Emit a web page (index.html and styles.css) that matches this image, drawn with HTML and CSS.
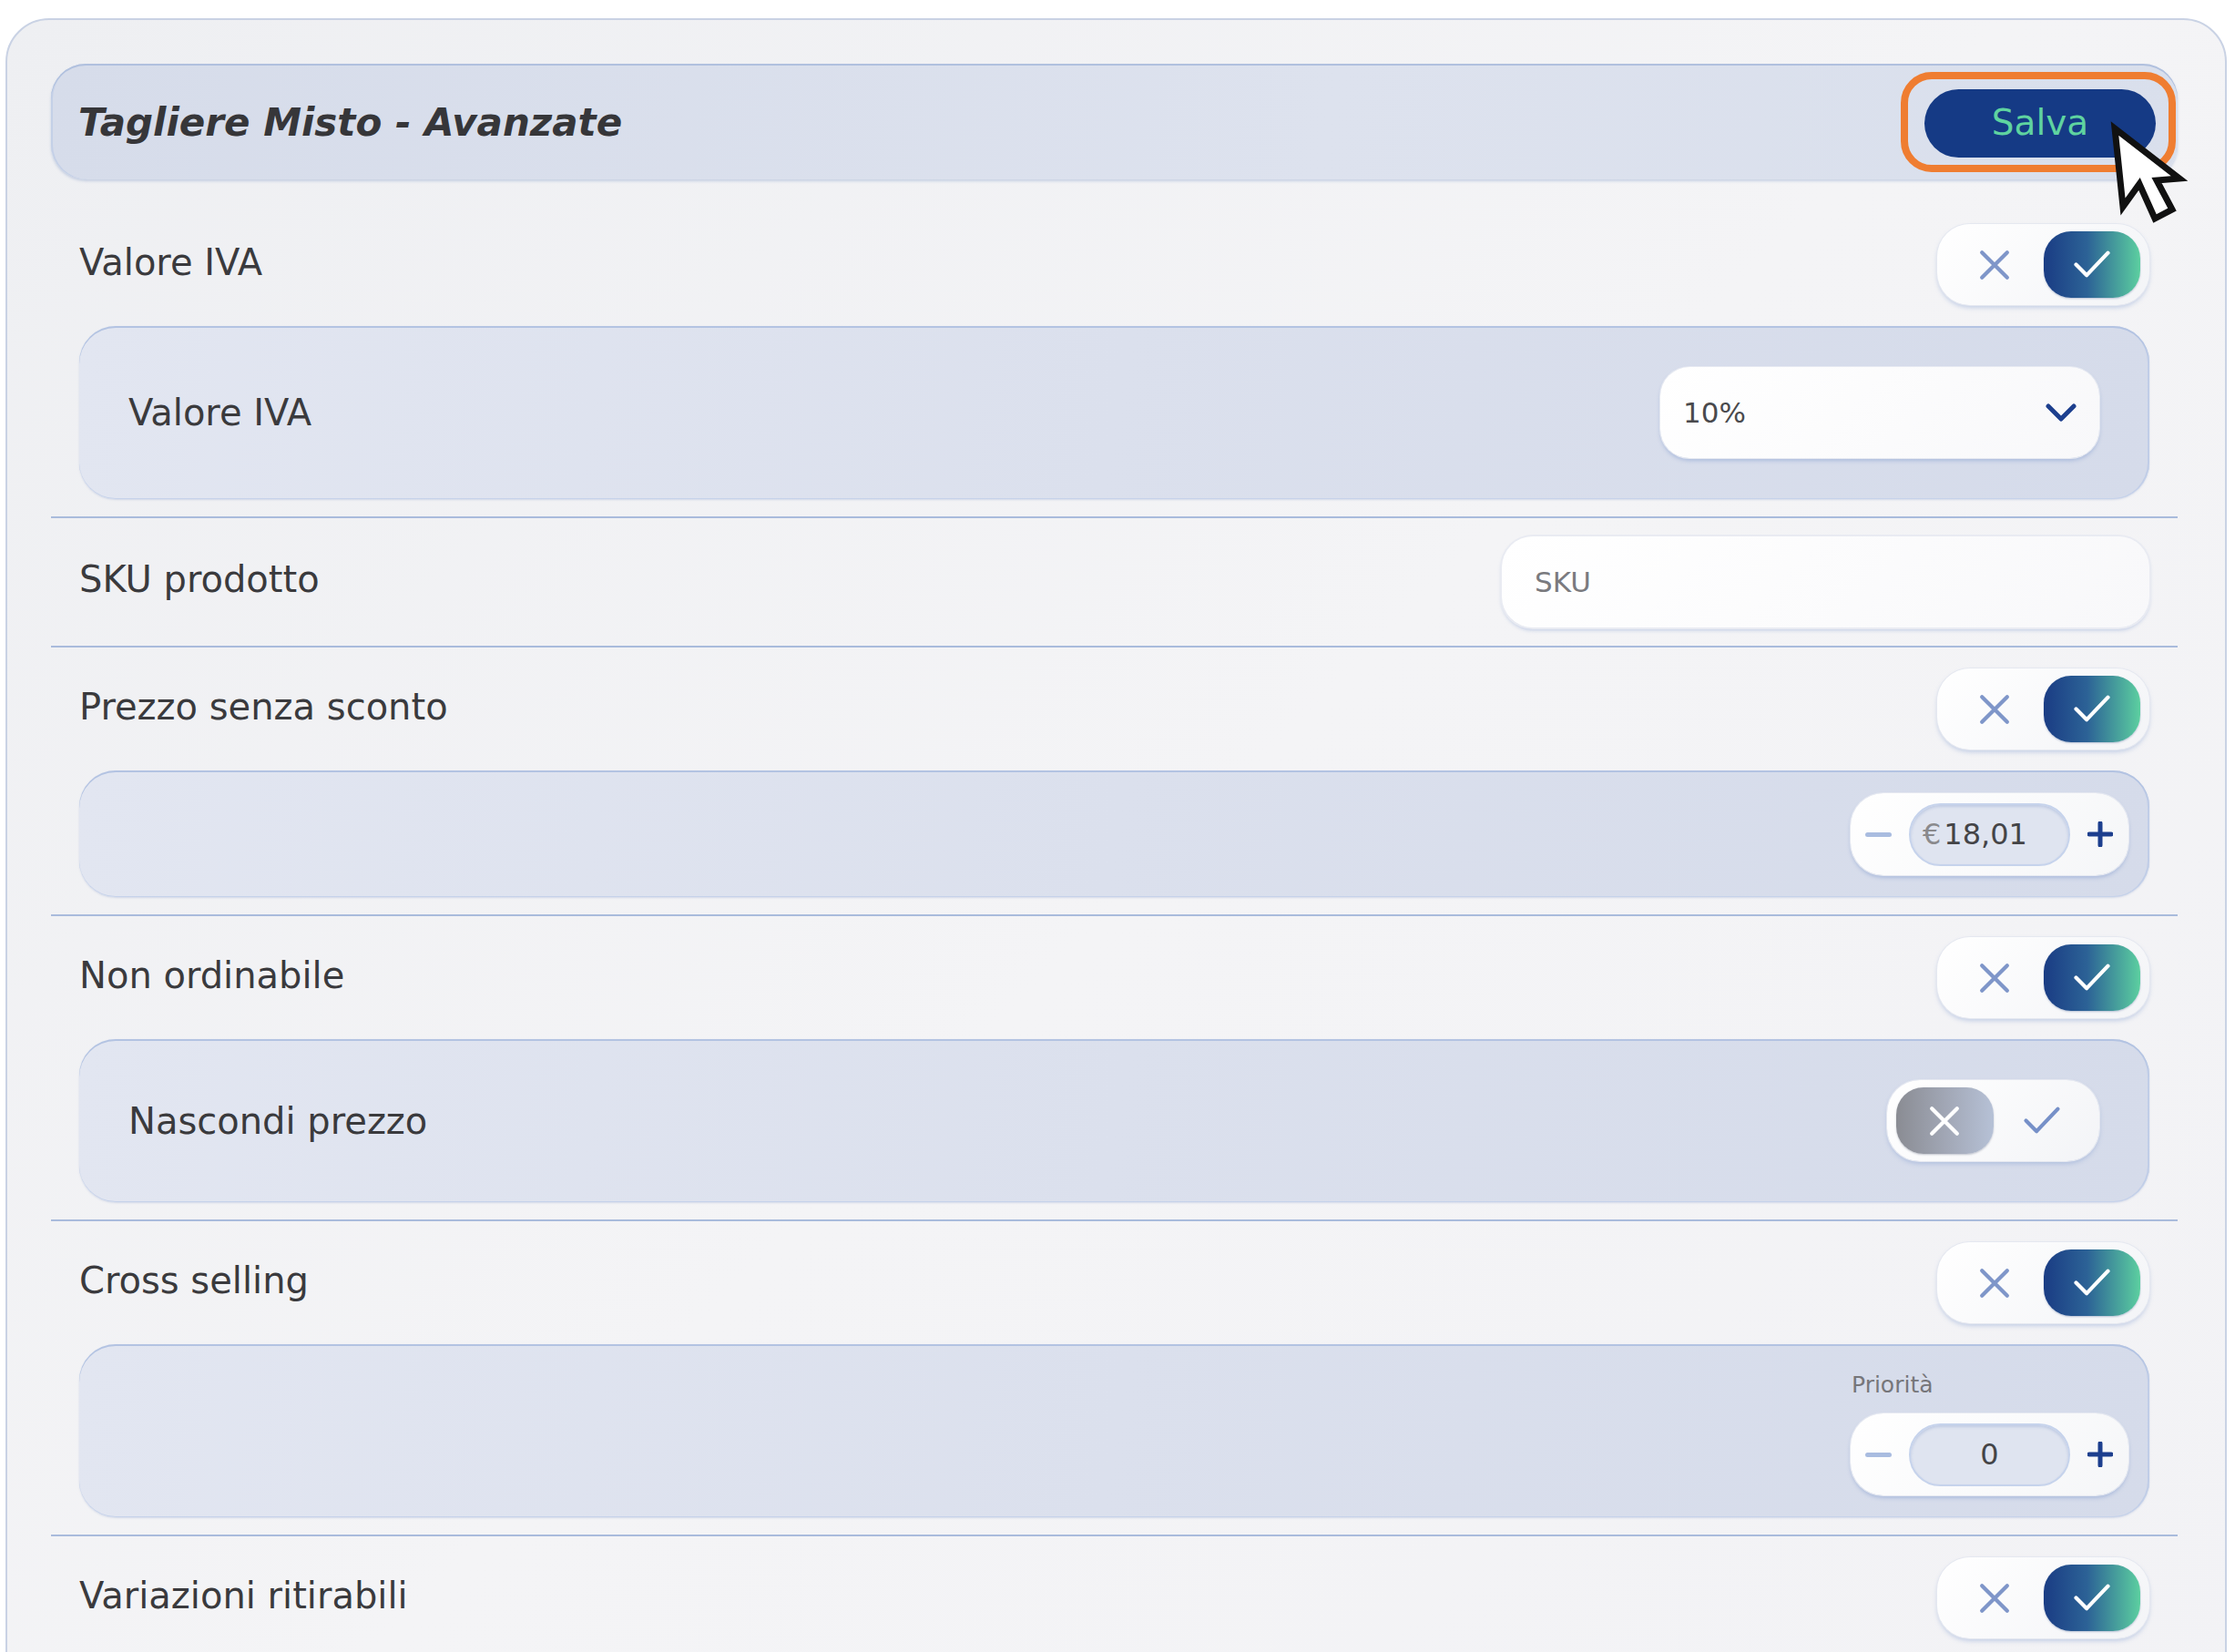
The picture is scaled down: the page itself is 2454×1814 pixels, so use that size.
FILE: index.html
```html
<!DOCTYPE html>
<html lang="it">
<head>
<meta charset="utf-8">
<title>Tagliere Misto - Avanzate</title>
<link rel="stylesheet" href="styles.css">
</head>
<body>
<div class="card">
  <div class="header">
    <h1 class="title">Tagliere Misto - Avanzate</h1>
    <div class="ring"><button class="save">Salva</button></div>
  </div>

  <section class="section">
    <div class="row">
      <span class="label">Valore IVA</span>
      <div class="toggle">
        <span class="slot"><svg class="ico-x" viewBox="0 0 32 32"><path d="M3 3L29 29M29 3L3 29"/></svg></span>
        <span class="slot slot-on"><svg class="ico-check" viewBox="0 0 36 28"><path d="M3 14L13 24L33 3"/></svg></span>
      </div>
    </div>
    <div class="panel panel-wide">
      <span class="label label-inner">Valore IVA</span>
      <div class="select">
        <span class="select-text">10%</span>
        <svg class="chev" viewBox="0 0 34 20"><path d="M3 3L17 17L31 3"/></svg>
      </div>
    </div>
  </section>
  <div class="divider"></div>

  <section class="section section-plain">
    <div class="row">
      <span class="label">SKU prodotto</span>
      <div class="input"><span class="placeholder">SKU</span></div>
    </div>
  </section>
  <div class="divider"></div>

  <section class="section">
    <div class="row">
      <span class="label">Prezzo senza sconto</span>
      <div class="toggle">
        <span class="slot"><svg class="ico-x" viewBox="0 0 32 32"><path d="M3 3L29 29M29 3L3 29"/></svg></span>
        <span class="slot slot-on"><svg class="ico-check" viewBox="0 0 36 28"><path d="M3 14L13 24L33 3"/></svg></span>
      </div>
    </div>
    <div class="panel panel-tight">
      <div class="stepper">
        <span class="minus"></span>
        <span class="value value-left"><span class="cur">€</span>18,01</span>
        <svg class="plus" viewBox="0 0 28 28"><path d="M14 2V26M2 14H26"/></svg>
      </div>
    </div>
  </section>
  <div class="divider"></div>

  <section class="section">
    <div class="row">
      <span class="label">Non ordinabile</span>
      <div class="toggle">
        <span class="slot"><svg class="ico-x" viewBox="0 0 32 32"><path d="M3 3L29 29M29 3L3 29"/></svg></span>
        <span class="slot slot-on"><svg class="ico-check" viewBox="0 0 36 28"><path d="M3 14L13 24L33 3"/></svg></span>
      </div>
    </div>
    <div class="panel panel-wide">
      <span class="label label-inner">Nascondi prezzo</span>
      <div class="toggle">
        <span class="slot slot-off"><svg class="ico-x ico-white" viewBox="0 0 32 32"><path d="M3 3L29 29M29 3L3 29"/></svg></span>
        <span class="slot"><svg class="ico-check ico-blue" viewBox="0 0 36 28"><path d="M3 14L13 24L33 3"/></svg></span>
      </div>
    </div>
  </section>
  <div class="divider"></div>

  <section class="section">
    <div class="row">
      <span class="label">Cross selling</span>
      <div class="toggle">
        <span class="slot"><svg class="ico-x" viewBox="0 0 32 32"><path d="M3 3L29 29M29 3L3 29"/></svg></span>
        <span class="slot slot-on"><svg class="ico-check" viewBox="0 0 36 28"><path d="M3 14L13 24L33 3"/></svg></span>
      </div>
    </div>
    <div class="panel panel-stack">
      <div class="field">
        <span class="field-label">Priorità</span>
        <div class="stepper">
          <span class="minus"></span>
          <span class="value">0</span>
          <svg class="plus" viewBox="0 0 28 28"><path d="M14 2V26M2 14H26"/></svg>
        </div>
      </div>
    </div>
  </section>
  <div class="divider"></div>

  <section class="section">
    <div class="row">
      <span class="label">Variazioni ritirabili</span>
      <div class="toggle">
        <span class="slot"><svg class="ico-x" viewBox="0 0 32 32"><path d="M3 3L29 29M29 3L3 29"/></svg></span>
        <span class="slot slot-on"><svg class="ico-check" viewBox="0 0 36 28"><path d="M3 14L13 24L33 3"/></svg></span>
      </div>
    </div>
  </section>

  <svg class="cursor" viewBox="2300 120 110 150">
    <path d="M2322 141 L2331 227 L2349 202 L2366 240 L2385 230 L2368 198 L2393 196 Z"/>
  </svg>
</div>
</body>
</html>
```

FILE: styles.css
```css
html, body {
  margin: 0;
  padding: 0;
  height: 1814px;
  overflow: hidden;
  background: #ffffff;
}

body {
  font-family: "DejaVu Sans", "Open Sans", sans-serif;
  color: #3a3a3d;
}

.card {
  position: relative;
  margin: 20px 9px 0 6px;
  padding: 48px 52px 160px 48px;
  border: 2px solid #c9d2e4;
  border-radius: 48px;
  background: linear-gradient(135deg, #eeeff2 0%, #f4f4f6 50%, #f2f2f5 100%);
}

.header {
  height: 127px;
  box-sizing: border-box;
  display: flex;
  align-items: center;
  justify-content: space-between;
  padding: 0 2px 0 30px;
  margin-bottom: 26px;
  border-radius: 38px;
  background: linear-gradient(100deg, #d6dcea 0%, #dde2ee 60%, #d9dfec 100%);
  box-shadow: inset 0 2px 0 #b0c0de, inset 2px 0 0 #c4d0e7, 0 2px 3px rgba(120, 145, 195, 0.35);
}

.title {
  margin: 0;
  font-size: 42px;
  font-weight: bold;
  font-style: italic;
  color: #363639;
  padding-top: 2px;
}

.ring {
  border: 8px solid #ef7d31;
  border-radius: 34px;
  padding: 11px 14px 8px 18px;
}

.save {
  display: flex;
  align-items: center;
  justify-content: center;
  width: 254px;
  height: 75px;
  border: none;
  border-radius: 38px;
  background: #153a85;
  color: #5fd3a0;
  font-family: "DejaVu Sans", sans-serif;
  font-size: 39px;
  padding: 0 0 2px 0;
}

.section {
  padding: 23px 31px 19px 31px;
}

.section-plain {
  padding: 20px 31px 20px 31px;
}

.divider {
  height: 2px;
  background: #a9bbdc;
}

.row {
  display: flex;
  align-items: center;
  justify-content: space-between;
}

.label {
  font-size: 40px;
  line-height: 48px;
  padding-bottom: 6px;
  color: #3a3a3d;
}

.label-inner {
  padding-bottom: 0;
}

.toggle {
  width: 233px;
  height: 89px;
  box-sizing: border-box;
  padding: 8px 10px;
  display: grid;
  grid-template-columns: 1fr 1fr;
  border-radius: 36px;
  background: linear-gradient(135deg, #ffffff 0%, #f3f4f7 100%);
  box-shadow: 0 0 0 1px #e5e8f0, 0 3px 5px rgba(110, 140, 200, 0.35);
}

.slot {
  display: flex;
  align-items: center;
  justify-content: center;
  border-radius: 30px;
}

.slot-on {
  background: linear-gradient(90deg, #1a3c84 0%, #2c6296 45%, #5ccfa0 100%);
  box-shadow: 0 1px 2px rgba(40, 70, 130, 0.3);
}

.slot-off {
  background: linear-gradient(90deg, #8a8c93 0%, #a3a9b8 55%, #b6c1d6 100%);
  box-shadow: 0 1px 2px rgba(60, 70, 100, 0.3);
}

.ico-x {
  width: 34px;
  height: 34px;
  fill: none;
  stroke: #7f96c9;
  stroke-width: 4;
  stroke-linecap: round;
}

.ico-white {
  stroke: #ffffff;
}

.ico-check {
  width: 42px;
  height: 33px;
  fill: none;
  stroke: #ffffff;
  stroke-width: 3.6;
  stroke-linecap: round;
  stroke-linejoin: round;
}

.ico-blue {
  stroke: #7690c8;
}

.panel {
  margin-top: 23px;
  border-radius: 40px;
  background: linear-gradient(100deg, #e2e6f1 0%, #dbe0ed 50%, #d5dbea 100%);
  box-shadow: inset 0 2px 0 #b3c3e2, inset 0 -1px 0 #c6d2ea, inset -2px 0 0 #c0cde7, 0 1px 2px rgba(120, 145, 195, 0.25);
}

.panel-wide {
  display: flex;
  align-items: center;
  justify-content: space-between;
  padding: 45px 55px 45px 54px;
}

.panel-tight {
  display: flex;
  justify-content: flex-end;
  padding: 25px 23px 24px 23px;
}

.panel-stack {
  display: flex;
  justify-content: flex-end;
  padding: 30px 23px 24px 23px;
}

.field {
  display: flex;
  flex-direction: column;
  align-items: flex-start;
}

.field-label {
  font-size: 25px;
  line-height: 30px;
  color: #76767a;
  margin: 0 0 16px 1px;
}

.select {
  width: 482px;
  height: 100px;
  box-sizing: border-box;
  display: flex;
  align-items: center;
  justify-content: space-between;
  padding: 0 25px 0 25px;
  border-radius: 32px;
  background: linear-gradient(135deg, #ffffff 0%, #f8f8fa 100%);
  box-shadow: 0 0 0 1px #e6e9f1, 0 3px 4px rgba(110, 140, 200, 0.4);
}

.select-text {
  font-size: 31px;
  color: #4a4a4d;
}

.chev {
  width: 34px;
  height: 20px;
  fill: none;
  stroke: #1d3f8e;
  stroke-width: 5;
  stroke-linecap: round;
  stroke-linejoin: round;
}

.input {
  width: 711px;
  height: 100px;
  box-sizing: border-box;
  display: flex;
  align-items: center;
  padding-left: 36px;
  border-radius: 34px;
  background: linear-gradient(135deg, #ffffff 0%, #f8f8fa 100%);
  box-shadow: 0 0 0 2px #e9ebf2, 0 3px 4px rgba(110, 140, 200, 0.4);
}

.placeholder {
  font-size: 31px;
  color: #7a7a7e;
}

.stepper {
  width: 305px;
  height: 90px;
  box-sizing: border-box;
  display: flex;
  align-items: center;
  gap: 19px;
  padding: 0 17px 0 16px;
  border-radius: 36px;
  background: linear-gradient(135deg, #ffffff 0%, #f5f6f8 100%);
  box-shadow: 0 0 0 1px #e6e9f1, 0 3px 4px rgba(110, 140, 200, 0.4);
}

.minus {
  width: 29px;
  height: 5px;
  border-radius: 3px;
  background: #a9bce0;
}

.value {
  width: 177px;
  height: 69px;
  box-sizing: border-box;
  display: flex;
  align-items: center;
  justify-content: center;
  border-radius: 35px;
  background: #dfe4f0;
  border: 2px solid #c6d3ec;
  box-shadow: inset 0 2px 3px rgba(120, 145, 200, 0.3);
  font-size: 32px;
  color: #444447;
}

.value-left {
  justify-content: flex-start;
  padding-left: 13px;
}

.cur {
  color: #8a8a8d;
  margin-right: 3px;
}

.plus {
  width: 28px;
  height: 28px;
  fill: none;
  stroke: #1d3f8e;
  stroke-width: 5;
  stroke-linecap: round;
}

.cursor {
  position: absolute;
  left: 2292px;
  top: 98px;
  width: 110px;
  height: 150px;
}

.cursor path {
  fill: #ffffff;
  stroke: #111111;
  stroke-width: 7;
  stroke-linejoin: miter;
  stroke-miterlimit: 3;
}
```
